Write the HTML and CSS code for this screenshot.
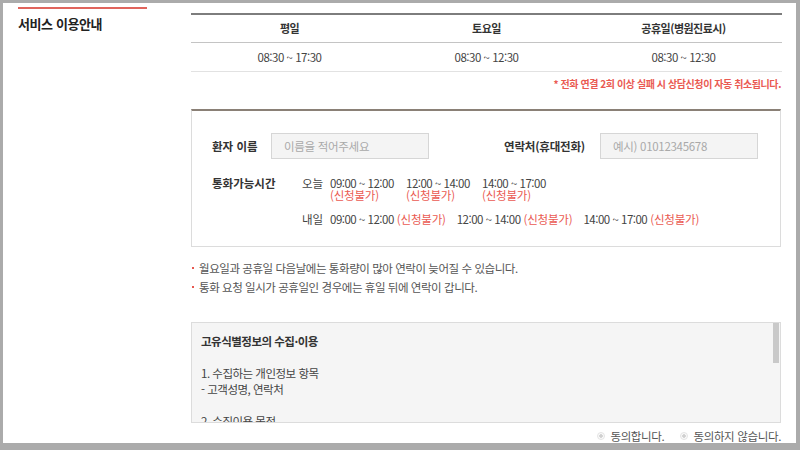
FILE: index.html
```html
<!DOCTYPE html>
<html lang="ko">
<head>
<meta charset="utf-8">
<link rel="stylesheet" href="styles.css">
</head>
<body>
<div class="frame">
  <aside class="side">
    <h2 class="side-title">서비스 이용안내</h2>
  </aside>
  <main class="content">
    <table class="hours">
      <thead>
        <tr><th>평일</th><th>토요일</th><th>공휴일(병원진료시)</th></tr>
      </thead>
      <tbody>
        <tr><td>08:30 ~ 17:30</td><td>08:30 ~ 12:30</td><td>08:30 ~ 12:30</td></tr>
      </tbody>
    </table>
    <p class="notice">* 전화 연결 2회 이상 실패 시 상담신청이 자동 취소됩니다.</p>

    <section class="form-box">
      <div class="form-row">
        <div class="field">
          <span class="label name-label">환자 이름</span>
          <span class="input placeholder">이름을 적어주세요</span>
        </div>
        <div class="field">
          <span class="label phone-label">연락처(휴대전화)</span>
          <span class="input placeholder">예시) 01012345678</span>
        </div>
      </div>
      <div class="time-row">
        <span class="label time-label">통화가능시간</span>
        <div class="days">
          <div class="day today">
            <span class="day-name">오늘</span>
            <div class="slot"><span class="time">09:00 ~ 12:00</span><span class="red">(신청불가)</span></div>
            <div class="slot"><span class="time">12:00 ~ 14:00</span><span class="red">(신청불가)</span></div>
            <div class="slot"><span class="time">14:00 ~ 17:00</span><span class="red">(신청불가)</span></div>
          </div>
          <div class="day tomorrow">
            <span class="day-name">내일</span>
            <div class="slot inline"><span class="time">09:00 ~ 12:00</span><span class="red">(신청불가)</span></div>
            <div class="slot inline"><span class="time">12:00 ~ 14:00</span><span class="red">(신청불가)</span></div>
            <div class="slot inline"><span class="time">14:00 ~ 17:00</span><span class="red">(신청불가)</span></div>
          </div>
        </div>
      </div>
    </section>

    <ul class="bullets">
      <li>월요일과 공휴일 다음날에는 통화량이 많아 연락이 늦어질 수 있습니다.</li>
      <li>통화 요청 일시가 공휴일인 경우에는 휴일 뒤에 연락이 갑니다.</li>
    </ul>

    <div class="terms">
      <div class="terms-text">
        <p class="terms-title">고유식별정보의 수집·이용</p>
        <p>&nbsp;</p>
        <p>1. 수집하는 개인정보 항목</p>
        <p>- 고객성명, 연락처</p>
        <p>&nbsp;</p>
        <p>2. 수집이용 목적</p>
      </div>
      <div class="scrollbar"><div class="thumb"></div></div>
    </div>

    <div class="agree">
      <label class="radio"><span class="dot"></span>동의합니다.</label>
      <label class="radio"><span class="dot"></span>동의하지 않습니다.</label>
    </div>
  </main>
</div>
</body>
</html>
```

FILE: styles.css
```css
* { box-sizing: border-box; }
html, body { margin: 0; padding: 0; }
body {
  background: #ababab;
  font-family: "Noto Sans CJK KR", "Noto Sans", sans-serif;
  color: #444;
  width: 800px;
  height: 450px;
  overflow: hidden;
  padding: 3px 4px 0 3px;
}
.frame {
  background: #fff;
  height: 440px;
  display: flex;
  overflow: hidden;
}
.side {
  width: 188px;
  padding-left: 15px;
  flex: none;
}
.side-title {
  margin: 0;
  width: 129px;
  border-top: 2px solid #e0645c;
  padding-top: 6px;
  margin-top: 4px;
  font-size: 13px;
  font-weight: bold;
  color: #222;
  line-height: 18px;
  letter-spacing: -0.4px;
}
.content {
  width: 591px;
  padding-top: 10px;
  font-size: 11.5px;
}
.hours {
  width: 100%;
  border-collapse: collapse;
  table-layout: fixed;
  border-top: 2px solid #7d7d7d;
}
.hours th {
  font-weight: bold;
  color: #333;
  height: 28px;
  border-bottom: 1px solid #c4c4c4;
  font-size: 11px;
  letter-spacing: -0.5px;
  padding: 0;
}
.hours td {
  text-align: center;
  color: #444;
  height: 29px;
  border-bottom: 1px solid #e2e2e2;
  padding: 0;
  letter-spacing: -0.5px;
}
.notice {
  margin: 0;
  text-align: right;
  color: #ea5a52;
  font-weight: bold;
  font-size: 10px;
  line-height: 14px;
  letter-spacing: -0.42px;
  padding: 5px 1px 0 0;
  height: 37px;
}
.form-box {
  border: 1px solid #dcdcdc;
  border-top: 2px solid #8a8076;
  width: 590px;
  height: 138px;
  padding: 22px 22px 0 20px;
}
.form-row {
  display: flex;
  justify-content: space-between;
  align-items: center;
  height: 26px;
}
.field {
  display: flex;
  align-items: center;
}
.label {
  font-weight: bold;
  color: #333;
}
.name-label { width: 59px; }
.phone-label { margin-right: 15px; letter-spacing: -0.2px; }
.input {
  width: 158px;
  height: 26px;
  background: #f4f4f4;
  border: 1px solid #d6d6d6;
  padding-left: 12px;
  line-height: 24px;
  letter-spacing: -0.3px;
}
.placeholder { color: #a9a9a9; }
.time-row {
  display: flex;
  margin-top: 16px;
}
.time-label { width: 90px; flex: none; line-height: 17px; }
.days { display: flex; flex-direction: column; gap: 10px; }
.day { display: flex; align-items: flex-start; }
.day-name { width: 28px; line-height: 17px; }
.time { letter-spacing: -0.5px; }
.slot {
  display: flex;
  flex-direction: column;
  line-height: 12px;
  padding-top: 2px;
}
.today .slot { width: 76px; }
.today .slot:first-of-type { width: 76px; }
.slot.inline {
  flex-direction: row;
  gap: 3px;
  margin-right: 11px;
  line-height: 17px;
  padding-top: 0;
}
.red { color: #ea5a52; letter-spacing: -0.2px; }
.bullets {
  list-style: none;
  margin: 12px 0 0;
  padding: 0;
  color: #555;
  line-height: 19px;
  letter-spacing: -0.45px;
}
.bullets li {
  position: relative;
  padding-left: 8px;
}
.bullets li::before {
  content: "";
  position: absolute;
  left: 1px;
  top: 8px;
  width: 2px;
  height: 2px;
  background: #e8584f;
}
.terms {
  margin-top: 25px;
  height: 101px;
  border: 1px solid #dcdcdc;
  background: #f5f5f5;
  display: flex;
  overflow: hidden;
  width: 590px;
}
.terms-text {
  flex: 1;
  padding: 10px 0 0 9px;
  color: #444;
  line-height: 16px;
  letter-spacing: -0.5px;
}
.terms-text p { margin: 0; }
.terms-title { font-weight: bold; color: #333; }
.scrollbar {
  width: 6px;
  margin-right: 1px;
}
.thumb {
  height: 40px;
  background: #c9c9c9;
}
.agree {
  display: flex;
  justify-content: flex-end;
  gap: 16px;
  margin-top: 5px;
  color: #555;
  padding-right: 1px;
  letter-spacing: -0.35px;
}
.radio {
  display: flex;
  align-items: center;
  gap: 5px;
}
.dot {
  width: 8px;
  height: 8px;
  border-radius: 50%;
  border: 1px solid #e4e4e4;
  background: radial-gradient(circle, #d0d0d0 0 1.5px, #fafafa 2px);
}
```
